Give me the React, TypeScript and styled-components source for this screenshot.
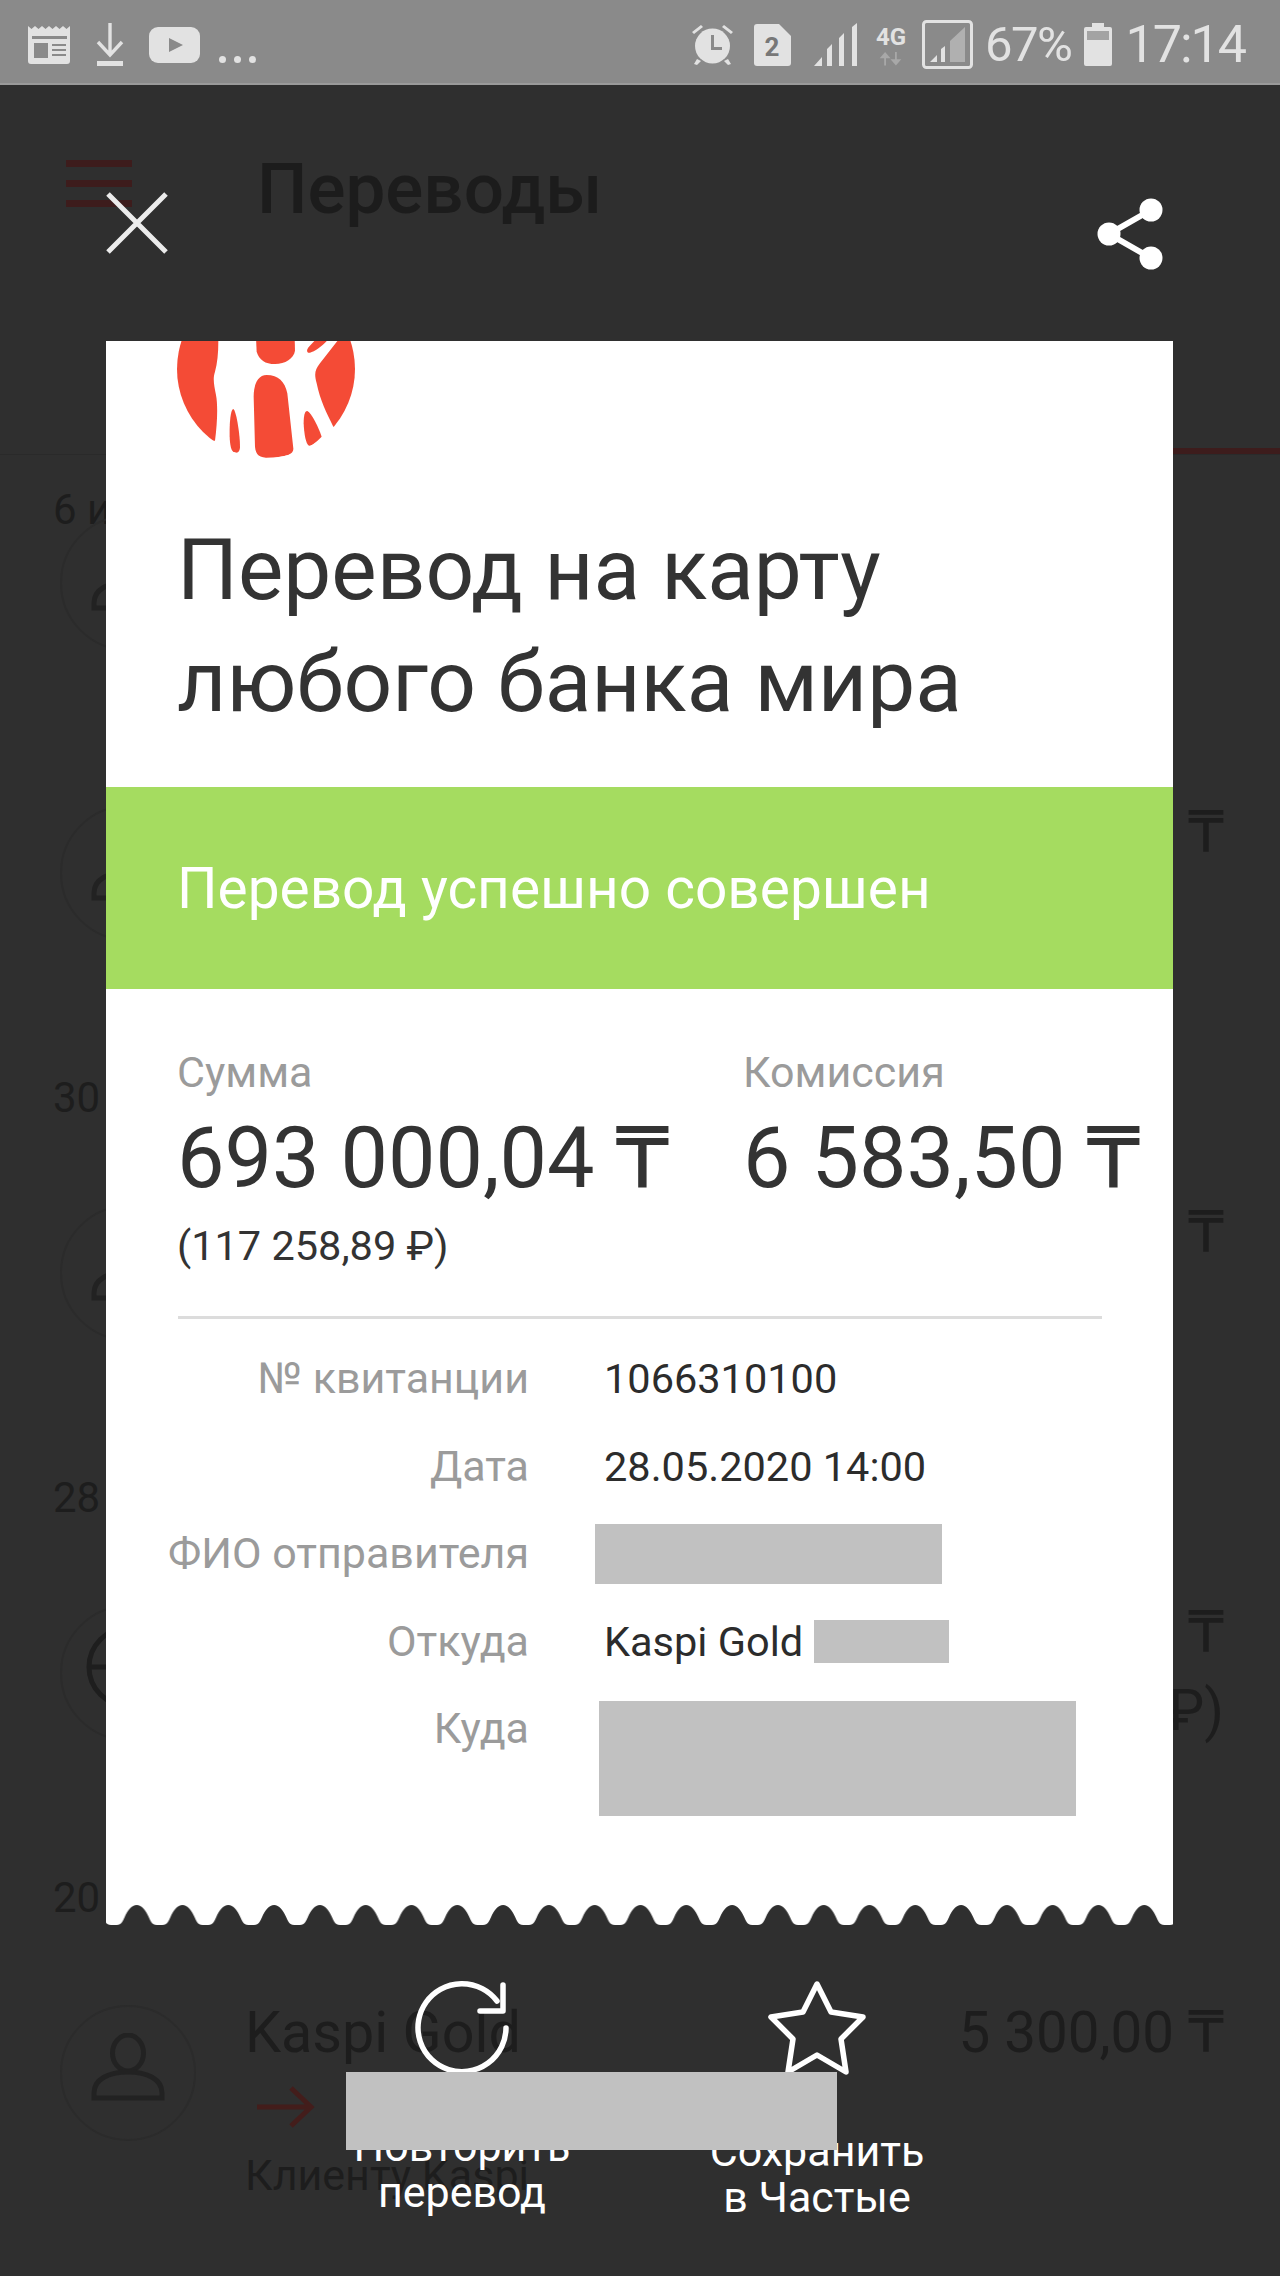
import styled, { createGlobalStyle } from "styled-components";

const GlobalStyle = createGlobalStyle`
  html, body {
    margin: 0;
    padding: 0;
    background: #2f2f2f;
  }
  * {
    box-sizing: border-box;
  }
`;

const rows = [
  { label: "№ квитанции", value: "1066310100" },
  { label: "Дата", value: "28.05.2020 14:00" },
];

function NewsIcon() {
  return (
    <svg width="43" height="38" viewBox="0 0 43 38">
      <path d="M0 0l3.5 3 3.5-3 3.5 3 3.5-3 3.5 3 3.5-3 3.5 3 3.5-3 3.5 3 3.5-3 3.5 3 3.5-3V35a3 3 0 0 1-3 3H3a3 3 0 0 1-3-3z" fill="#e2e2e2" />
      <path d="M4 10h35v3H4zM6 17h14v15H6z" fill="#8a8a8a" />
      <path d="M24 18h14v2H24zM24 23h14v2H24zM24 28h14v2H24z" fill="#8a8a8a" />
    </svg>
  );
}

function DownloadIcon() {
  return (
    <svg width="28" height="43" viewBox="0 0 28 43">
      <path d="M14 0v32M2 19l12 13 12-13" fill="none" stroke="#e2e2e2" strokeWidth="3.4" />
      <path d="M1 38h26v5H1z" fill="#e2e2e2" />
    </svg>
  );
}

function YoutubeIcon() {
  return (
    <svg width="51" height="36" viewBox="0 0 51 36">
      <rect width="51" height="36" rx="9" fill="#e2e2e2" />
      <path d="M20 11l14 7-14 7z" fill="#8a8a8a" />
    </svg>
  );
}

function AlarmIcon() {
  return (
    <svg width="43" height="43" viewBox="0 0 43 43">
      <circle cx="21.5" cy="23" r="17.5" fill="#e2e2e2" />
      <path d="M1 9l9-7 2 2-9 7zM42 9l-9-7-2 2 9 7zM6 36l-3 5 3 1 4-4zM37 36l3 5-3 1-4-4z" fill="#e2e2e2" />
      <path d="M20 12h3v12h8v3H20z" fill="#8a8a8a" />
    </svg>
  );
}

function SimIcon() {
  return (
    <svg width="37" height="42" viewBox="0 0 37 42">
      <path d="M3 0h22l12 12v27a3 3 0 0 1-3 3H3a3 3 0 0 1-3-3V3a3 3 0 0 1 3-3z" fill="#e2e2e2" />
      <text x="18" y="32" fontFamily="Roboto, sans-serif" fontSize="26" fontWeight="700" textAnchor="middle" fill="#777">2</text>
    </svg>
  );
}

function SignalIcon() {
  return (
    <svg width="44" height="43" viewBox="0 0 44 43">
      <path d="M0 43l8-9v9zM13 43V26l5-5v22zM25 43V15l5-5v33zM38 43V4l5-4v43z" fill="#e2e2e2" />
    </svg>
  );
}

function NetworkIcon() {
  return (
    <Net>
      <NetLabel>4G</NetLabel>
      <svg width="28" height="15" viewBox="0 0 28 15">
        <path d="M8 15V7H3l6-7 6 7h-5v8zM20 0v8h-5l6 7 6-7h-5V0z" fill="#a8a8a8" transform="scale(0.9)" />
      </svg>
    </Net>
  );
}

function SignalBoxIcon() {
  return (
    <svg width="51" height="49" viewBox="0 0 51 49">
      <rect x="1.5" y="1.5" width="48" height="46" rx="3" fill="none" stroke="#e2e2e2" strokeWidth="3" />
      <path d="M8 42l7-7v7zM19 42V29l4-3v16z" fill="#e2e2e2" />
      <path d="M28 42V21l15-14v35z" fill="#b0b0b0" />
    </svg>
  );
}

function BatteryIcon() {
  return (
    <svg width="28" height="43" viewBox="0 0 28 43">
      <path d="M8 0h12v4h6a2 2 0 0 1 2 2v35a2 2 0 0 1-2 2H2a2 2 0 0 1-2-2V6a2 2 0 0 1 2-2h6z" fill="#e2e2e2" />
      <path d="M3 8h22v9H3z" fill="#a3a3a3" />
    </svg>
  );
}

function PersonIcon() {
  return (
    <svg width="74" height="68" viewBox="0 0 74 68">
      <ellipse cx="37" cy="20" rx="15.5" ry="18" fill="none" stroke="#222" strokeWidth="5" />
      <path d="M3 65V60C3 46 18 39 37 39C56 39 71 46 71 60V65Z" fill="none" stroke="#222" strokeWidth="5" />
    </svg>
  );
}

function GlobeIcon() {
  return (
    <svg width="84" height="84" viewBox="0 0 84 84">
      <circle cx="42" cy="42" r="39" fill="none" stroke="#1e1e1e" strokeWidth="5" />
      <path d="M3 42h78" stroke="#1e1e1e" strokeWidth="5" />
    </svg>
  );
}

function KaspiLogo() {
  return (
    <svg width="178" height="178" viewBox="0 0 178 178">
      <defs>
        <clipPath id="logoCircle">
          <circle cx="89" cy="89" r="89" />
        </clipPath>
      </defs>
      <g clipPath="url(#logoCircle)">
        <g transform="translate(-17 50) scale(0.3333)" fill="#f44b36">
          <path d="M40 -150H176L175 35C175 70 172 100 165 125C158 145 162 165 168 195C174 225 172 280 165 332L40 332Z" />
          <path d="M280 -150H400L405 62C402 85 375 102 345 102C315 102 298 90 290 65Z" />
          <path d="M466 30L505 28C490 45 465 65 450 68C440 70 438 60 447 50Z" />
          <path d="M536 28L620 28L620 330L520 290C500 250 480 210 470 160C462 130 465 120 480 100Z" />
          <path d="M320 135C355 135 375 155 382 190L400 355C402 372 380 380 340 383C300 385 288 378 285 350L281 200C281 160 295 135 320 135Z" />
          <path d="M220 237C228 240 240 310 240 350C240 365 232 370 224 368C215 365 210 350 209 320C208 280 212 237 220 237Z" />
          <path d="M442 243C455 250 475 290 485 320C470 335 455 348 447 347C438 345 432 310 431 280C431 255 435 242 442 243Z" />
        </g>
      </g>
    </svg>
  );
}

function Scallops() {
  return (
    <ScallopEdge width="1067" height="20" viewBox="0 0 1067 20">
      <defs>
        <pattern id="scallop" width="45.8" height="20" patternUnits="userSpaceOnUse" patternTransform="translate(7.7 0)">
          <path d="M0 20H3C8 20 9 16 11 12C14 5 18 0 23 0C28 0 32 5 35 12C37 16 38 20 43 20H45.8Z" fill="#2f2f2f" />
        </pattern>
      </defs>
      <rect width="1067" height="20" fill="url(#scallop)" />
    </ScallopEdge>
  );
}

export default function App() {
  return (
    <Page>
      <GlobalStyle />
      <StatusBar>
        <LeftIcons>
          <NewsIcon />
          <DownloadIcon />
          <YoutubeIcon />
          <MoreDots>
            <i />
            <i />
            <i />
          </MoreDots>
        </LeftIcons>
        <RightIcons>
          <AlarmIcon />
          <SimIcon />
          <SignalIcon />
          <NetworkIcon />
          <SignalBoxIcon />
          <Percent>67%</Percent>
          <BatteryIcon />
          <Clock>17:14</Clock>
        </RightIcons>
      </StatusBar>

      <AppBar>
        <AppBarRow>
          <Burger>
            <i />
            <i />
            <i />
          </Burger>
          <ScreenTitle>Переводы</ScreenTitle>
        </AppBarRow>
        <ActiveTab />
      </AppBar>

      <List>
        <DateLabel $height={56} $offset={4}>
          6 и
        </DateLabel>
        <Row $flush>
          <Avatar>
            <PersonIcon />
          </Avatar>
        </Row>
        <Row>
          <Avatar>
            <PersonIcon />
          </Avatar>
          <Amount>₸</Amount>
        </Row>
        <DateLabel>30</DateLabel>
        <Row>
          <Avatar>
            <PersonIcon />
          </Avatar>
          <Amount>₸</Amount>
        </Row>
        <DateLabel>28</DateLabel>
        <Row>
          <Avatar>
            <GlobeIcon />
          </Avatar>
          <Amount>
            ₸
            <br />₽)
          </Amount>
        </Row>
        <DateLabel>20</DateLabel>
        <Row>
          <Avatar>
            <PersonIcon />
          </Avatar>
          <RowBody>
            <RowName>Kaspi Gold</RowName>
            <svg width="58" height="42" viewBox="0 0 58 42">
              <path d="M0 21h54M34 2l20 19-20 19" fill="none" stroke="#431d1b" strokeWidth="5" />
            </svg>
            <RowHint>Клиенту Kaspi</RowHint>
          </RowBody>
          <Amount>5 300,00 ₸</Amount>
        </Row>
      </List>

      <Overlay>
        <OverlayHead>
          <svg width="62" height="62" viewBox="0 0 62 62">
            <path d="M2 2l58 58M60 2L2 60" stroke="#ececec" strokeWidth="5" />
          </svg>
          <ShareIcon width="66" height="72" viewBox="0 0 66 72">
            <path d="M54 12L12 36l42 24" fill="none" stroke="#fff" strokeWidth="6" />
            <circle cx="54" cy="12" r="11.5" fill="#fff" />
            <circle cx="12" cy="36" r="11.5" fill="#fff" />
            <circle cx="54" cy="60" r="11.5" fill="#fff" />
          </ShareIcon>
        </OverlayHead>

        <Card>
          <LogoClip>
            <KaspiLogo />
          </LogoClip>
          <Title>
            Перевод на карту
            <br />
            любого банка мира
          </Title>
          <SuccessBar>Перевод успешно совершен</SuccessBar>
          <Totals>
            <Total>
              <TotalLabel>Сумма</TotalLabel>
              <TotalValue>693 000,04 ₸</TotalValue>
              <TotalNote>(117 258,89 ₽)</TotalNote>
            </Total>
            <Total>
              <TotalLabel>Комиссия</TotalLabel>
              <TotalValue>6 583,50 ₸</TotalValue>
            </Total>
          </Totals>
          <Divider />
          <Details>
            {rows.map((r) => (
              <DetailRow key={r.label}>
                <DetailLabel>{r.label}</DetailLabel>
                <DetailValue>{r.value}</DetailValue>
              </DetailRow>
            ))}
            <DetailRow>
              <DetailLabel>ФИО отправителя</DetailLabel>
              <Hidden $w={347} $h={60} />
            </DetailRow>
            <DetailRow>
              <DetailLabel>Откуда</DetailLabel>
              <DetailValue>
                Kaspi Gold
                <Hidden $w={135} $h={43} $ml={11} />
              </DetailValue>
            </DetailRow>
            <DetailRow $top>
              <DetailLabel>Куда</DetailLabel>
              <Hidden $w={477} $h={115} $ml={4} $mt={16} />
            </DetailRow>
          </Details>
          <Scallops />
        </Card>

        <Actions>
          <Action>
            <svg width="96" height="100" viewBox="0 -3 96 100">
              <path d="M83 20A44 44 0 1 0 92 47" fill="none" stroke="#fff" strokeWidth="5.5" strokeLinecap="round" />
              <path d="M89 4V30H66" fill="none" stroke="#fff" strokeWidth="5.5" strokeLinecap="round" strokeLinejoin="round" />
            </svg>
            <ActionLabel $raised>
              Повторить
              <br />
              перевод
            </ActionLabel>
          </Action>
          <Action>
            <svg width="102" height="100" viewBox="0 0 102 100">
              <path d="M51 6L65 34L97 39L75 61L80 94L51 77L22 94L27 61L5 39L37 34Z" fill="none" stroke="#fff" strokeWidth="5.5" strokeLinejoin="round" />
            </svg>
            <ActionLabel>
              Сохранить
              <br />в Частые
            </ActionLabel>
          </Action>
          <ActionsCover />
        </Actions>
      </Overlay>
    </Page>
  );
}

const Page = styled.div`
  position: relative;
  width: 1280px;
  height: 2276px;
  overflow: hidden;
  background: #2f2f2f;
  font-family: Roboto, "DejaVu Sans", sans-serif;
`;

const StatusBar = styled.div`
  display: flex;
  align-items: center;
  justify-content: space-between;
  height: 85px;
  padding: 6px 35px 0 28px;
  background: #8a8a8a;
  border-bottom: 2px solid #9a9a9a;
  color: #e2e2e2;
`;

const LeftIcons = styled.div`
  display: flex;
  align-items: center;
  gap: 25px;
`;

const RightIcons = styled.div`
  display: flex;
  align-items: center;
  gap: 20px;

  > :nth-child(2) {
    margin-right: 3px;
  }
  > :nth-child(3) {
    margin-right: -4px;
  }
  > :nth-child(4) {
    margin-right: -6px;
  }
`;

const MoreDots = styled.div`
  display: flex;
  gap: 8px;
  align-self: flex-end;
  margin: 0 0 3px -6px;

  > i {
    width: 7px;
    height: 7px;
    border-radius: 50%;
    background: #e2e2e2;
  }
`;

const Net = styled.div`
  display: flex;
  flex-direction: column;
  align-items: center;
  width: 34px;
  gap: 1px;
`;

const NetLabel = styled.span`
  font-size: 24px;
  line-height: 28px;
  font-weight: 700;
`;

const Percent = styled.span`
  font-size: 49px;
  line-height: 50px;
  letter-spacing: -1.5px;
  font-weight: 400;
  margin: 0 -8px 0 -8px;
`;

const Clock = styled.span`
  font-size: 52px;
  line-height: 50px;
  font-weight: 400;
  letter-spacing: -2px;
  margin-left: -6px;
`;

const AppBar = styled.div`
  display: flex;
  flex-direction: column;
  justify-content: space-between;
  height: 370px;
  border-bottom: 1px solid #2a2a2a;
`;

const AppBarRow = styled.div`
  display: flex;
  align-items: flex-start;
  gap: 125px;
  padding: 75px 0 0 66px;
`;

const ActiveTab = styled.div`
  align-self: flex-end;
  width: 640px;
  height: 6px;
  background: #3d1c1c;
`;

const Burger = styled.div`
  display: flex;
  flex-direction: column;
  gap: 13px;
  width: 66px;

  > i {
    height: 7px;
    background: #3d1c1c;
  }
`;

const ScreenTitle = styled.div`
  font-size: 71px;
  line-height: 66px;
  font-weight: 500;
  color: #1c1c1c;
  margin-top: -4px;
`;

const List = styled.div`
  display: flex;
  flex-direction: column;
`;

const DateLabel = styled.div<{ $height?: number; $offset?: number }>`
  height: ${(p) => p.$height ?? 138}px;
  margin-top: ${(p) => p.$offset ?? 0}px;
  padding: 28px 0 0 53px;
  font-size: 42px;
  line-height: 46px;
  color: #1d1d1d;
`;

const Row = styled.div<{ $flush?: boolean }>`
  display: flex;
  align-items: flex-start;
  height: ${(p) => (p.$flush ? 270 : 262)}px;
  padding: ${(p) => (p.$flush ? 0 : 20)}px 56px 0 60px;
`;

const Avatar = styled.div`
  display: flex;
  align-items: center;
  justify-content: center;
  flex: none;
  width: 136px;
  height: 136px;
  padding-bottom: 12px;
  border: 2px solid #2b2b2b;
  border-radius: 50%;
`;

const RowBody = styled.div`
  display: flex;
  flex-direction: column;
  align-items: flex-start;
  margin: -5px 0 0 49px;

  > svg {
    margin: 20px 0 0 12px;
  }
`;

const RowName = styled.div`
  font-size: 57.5px;
  line-height: 66px;
  color: #1d1d1d;
`;

const RowHint = styled.div`
  font-size: 43px;
  line-height: 46px;
  margin-top: 24px;
  color: #1d1d1d;
`;

const Amount = styled.div`
  margin-left: auto;
  font-size: 56.5px;
  line-height: 78px;
  color: #1d1d1d;
  text-align: right;
  margin-top: -11px;
`;

const Overlay = styled.div`
  position: absolute;
  top: 85px;
  left: 0;
  right: 0;
  display: flex;
  flex-direction: column;
`;

const OverlayHead = styled.div`
  display: flex;
  align-items: flex-start;
  justify-content: space-between;
  height: 256px;
  padding: 107px 117px 0 106px;
`;

const ShareIcon = styled.svg`
  margin-top: 6px;
`;

const Card = styled.div`
  display: flex;
  flex-direction: column;
  width: 1067px;
  margin-left: 106px;
  background: #fff;
  overflow: hidden;
`;

const LogoClip = styled.div`
  height: 117px;
  padding-left: 71px;
  overflow: hidden;

  > svg {
    display: block;
    margin-top: -61px;
  }
`;

const Title = styled.h1`
  margin: 0;
  padding: 56px 0 0 71px;
  height: 329px;
  font-size: 85.5px;
  line-height: 112px;
  font-weight: 400;
  color: #333;
`;

const SuccessBar = styled.div`
  display: flex;
  align-items: center;
  height: 202px;
  padding-left: 71px;
  background: #a5dc60;
  color: #fff;
  font-size: 56.8px;
`;

const Totals = styled.div`
  display: grid;
  grid-template-columns: 566px 1fr;
  height: 327px;
  padding: 60px 0 0 71px;
  white-space: nowrap;
`;

const Total = styled.div`
  display: flex;
  flex-direction: column;
`;

const TotalLabel = styled.div`
  font-size: 43px;
  line-height: 46px;
  color: #9b9b9b;
`;

const TotalValue = styled.div`
  margin-top: 17px;
  font-size: 84.5px;
  line-height: 94px;
  color: #333;
`;

const TotalNote = styled.div`
  margin-top: 15px;
  font-size: 41.5px;
  line-height: 50px;
  color: #333;
`;

const Divider = styled.div`
  width: 924px;
  height: 3px;
  margin-left: 72px;
  background: #dcdcdc;
`;

const Details = styled.div`
  display: flex;
  flex-direction: column;
  height: 606px;
  padding-top: 16px;
`;

const DetailRow = styled.div<{ $top?: boolean }>`
  display: grid;
  grid-template-columns: 423px 1fr;
  column-gap: 66px;
  align-items: ${(p) => (p.$top ? "start" : "center")};
  min-height: 87.5px;
`;

const DetailLabel = styled.div`
  font-size: 43px;
  line-height: 87px;
  text-align: right;
  color: #9b9b9b;
  white-space: nowrap;
`;

const DetailValue = styled.div`
  display: flex;
  align-items: center;
  padding-left: 9px;
  font-size: 41.5px;
  color: #2c2c2c;
`;

const Hidden = styled.div<{ $w: number; $h: number; $ml?: number; $mt?: number }>`
  width: ${(p) => p.$w}px;
  height: ${(p) => p.$h}px;
  margin-left: ${(p) => p.$ml ?? 0}px;
  margin-top: ${(p) => p.$mt ?? 0}px;
  background: #c1c1c1;
`;

const ScallopEdge = styled.svg`
  display: block;
  margin-top: -20px;
`;

const Actions = styled.div`
  position: relative;
  display: grid;
  grid-template-columns: 355px 355px;
  padding: 53px 0 0 284.5px;
`;

const Action = styled.div`
  display: flex;
  flex-direction: column;
  align-items: center;
  color: #fff;
`;

const ActionLabel = styled.div<{ $raised?: boolean }>`
  margin-top: ${(p) => (p.$raised ? 45 : 50)}px;
  font-size: 43px;
  line-height: 46px;
  text-align: center;
`;

const ActionsCover = styled.div`
  position: absolute;
  left: 346px;
  top: 147px;
  width: 491px;
  height: 78px;
  background: #c1c1c1;
`;
